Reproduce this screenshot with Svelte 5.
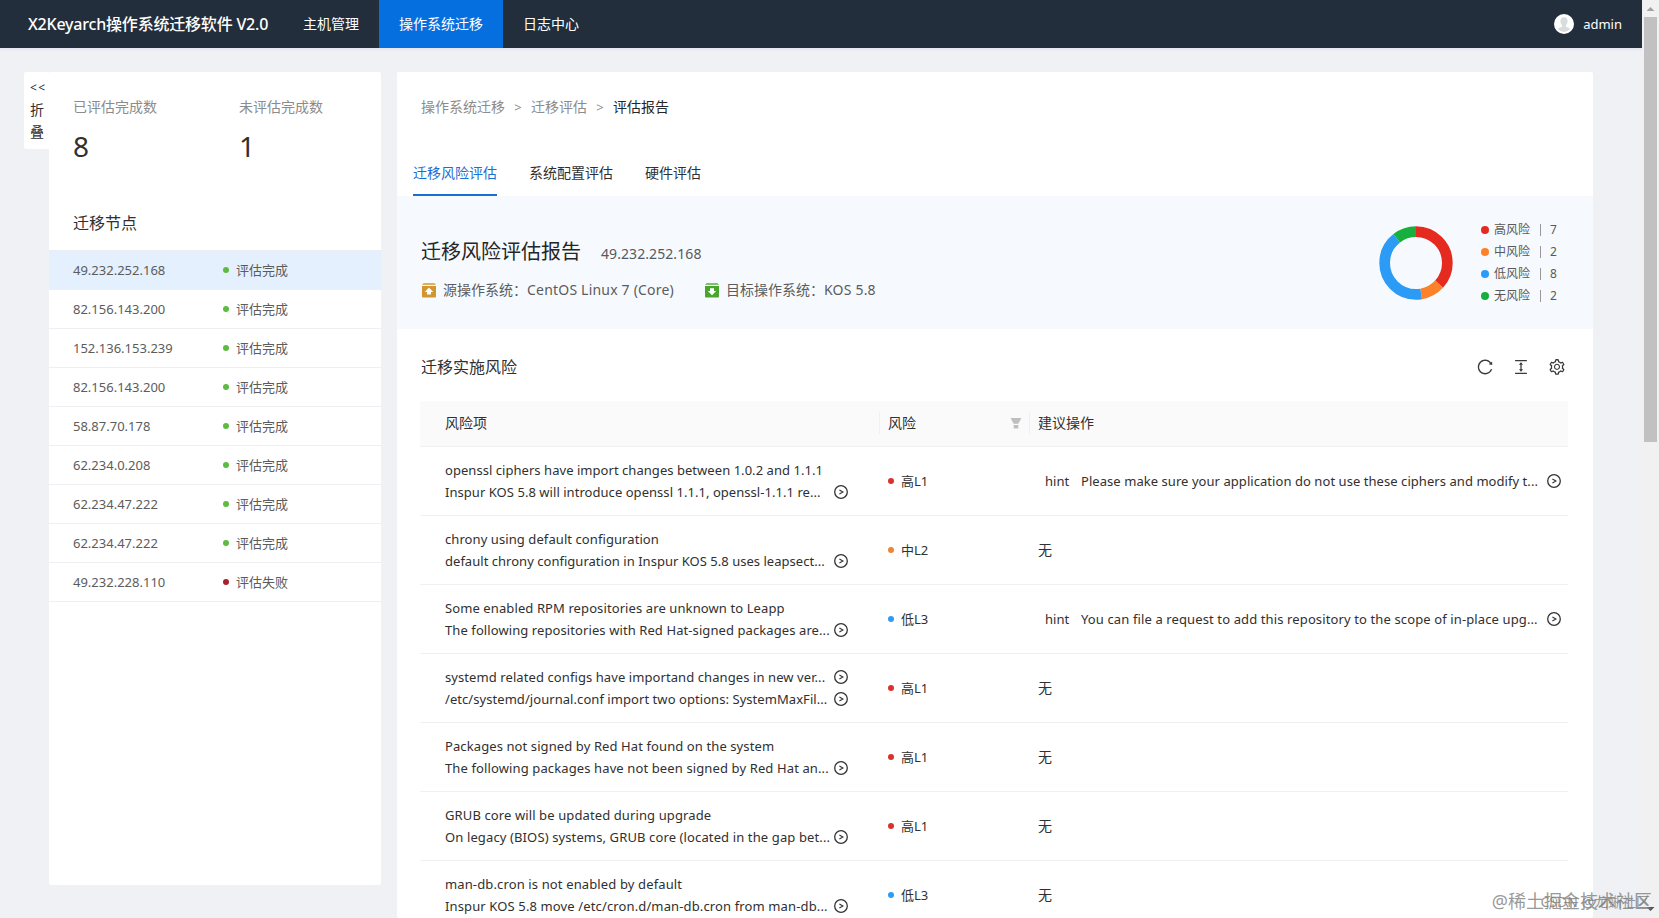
<script>
  const nodes = [
    ['49.232.252.168', true], ['82.156.143.200', true], ['152.136.153.239', true],
    ['82.156.143.200', true], ['58.87.70.178', true], ['62.234.0.208', true],
    ['62.234.47.222', true], ['62.234.47.222', true], ['49.232.228.110', false]
  ];
  const high = ['高L1', '#d9312b'];
  const mid = ['中L2', '#ee8434'];
  const low = ['低L3', '#2f9bf4'];
  // ls: letter spacing of the title, the summary and the hint, in px
  const risks = [
    { a: 'openssl ciphers have import changes between 1.0.2 and 1.1.1', b: 'Inspur KOS 5.8 will introduce openssl 1.1.1, openssl-1.1.1 re...', level: high, hint: 'Please make sure your application do not use these ciphers and modify t...', ls: [0.045, 0.045, 0.055] },
    { a: 'chrony using default configuration', b: 'default chrony configuration in Inspur KOS 5.8 uses leapsect...', level: mid, ls: [0.08, 0.025] },
    { a: 'Some enabled RPM repositories are unknown to Leapp', b: 'The following repositories with Red Hat-signed packages are...', level: low, hint: 'You can file a request to add this repository to the scope of in-place upg...', ls: [0.1, 0.09, 0.12] },
    { a: 'systemd related configs have importand changes in new ver...', more: true, b: '/etc/systemd/journal.conf import two options: SystemMaxFil...', level: high, ls: [0.085, 0.06] },
    { a: 'Packages not signed by Red Hat found on the system', b: 'The following packages have not been signed by Red Hat an...', level: high, ls: [0.1, 0.12] },
    { a: 'GRUB core will be updated during upgrade', b: 'On legacy (BIOS) systems, GRUB core (located in the gap bet...', level: high, ls: [0.11, 0.12] },
    { a: 'man-db.cron is not enabled by default', b: 'Inspur KOS 5.8 move /etc/cron.d/man-db.cron from man-db...', level: low, ls: [0.13, 0.13] }
  ];
  const legend = [
    { name: '高风险', n: 7, color: '#e52a20' },
    { name: '中风险', n: 2, color: '#fd8128' },
    { name: '低风险', n: 8, color: '#2b9bf5' },
    { name: '无风险', n: 2, color: '#17b03e' }
  ];
  const total = legend.reduce((s, l) => s + l.n, 0);
  let sum = 0;
  const arcs = legend.map((l) => {
    const arc = { color: l.color, len: (l.n / total) * 100, start: (sum / total) * 100 };
    sum += l.n;
    return arc;
  });
</script>

{#snippet more()}
  <svg class="more" viewBox="0 0 14 14" width="14" height="14" fill="none" stroke="#333">
    <circle cx="7" cy="7" r="6.3" stroke-width="1.3" />
    <path d="M5.4 5 8.900 7 5.400 9" stroke-width="1.1" />
  </svg>
{/snippet}

<div class="page">
  <div class="view">
    <header>
      <h1>X2Keyarch操作系统迁移软件 V2.0</h1>
      <nav><a>主机管理</a><a class="on">操作系统迁移</a><a>日志中心</a></nav>
      <div class="user">
        <svg viewBox="0 0 20 20" width="20" height="20">
          <circle cx="10" cy="10" r="10" fill="#fff" />
          <path d="M10 3.2c2.4 0 3.6 1.6 3.6 3.8 0 2-.8 3.4-1.7 4.2v1.3c.8.9 3.3 1.2 4.3 2.6A8.300 8.300 0 0 1 10 18a8.300 8.300 0 0 1-6.200-2.900c1-1.400 3.500-1.700 4.300-2.600v-1.300C7.200 10.400 6.400 9 6.400 7c0-2.200 1.200-3.800 3.600-3.800z" fill="#d9dcdc" />
        </svg>
        <span>admin</span>
      </div>
    </header>

    <div class="body">
      <div class="fold"><i>&lt;&lt;</i><span>折</span><span>叠</span></div>
      <aside>
        <div class="stats">
          <div><label>已评估完成数</label><b>8</b></div>
          <div><label>未评估完成数</label><b>1</b></div>
        </div>
        <h2>迁移节点</h2>
        <ul>
          {#each nodes as [ip, ok], i}
            <li class:sel={i === 0}><span class="ip">{ip}</span><em class:bad={!ok}></em><span>{ok ? '评估完成' : '评估失败'}</span></li>
          {/each}
        </ul>
      </aside>

      <main>
        <div class="crumbs"><span>操作系统迁移</span><i>&gt;</i><span>迁移评估</span><i>&gt;</i><span class="cur">评估报告</span></div>
        <div class="tabs"><span class="on">迁移风险评估</span><span>系统配置评估</span><span>硬件评估</span></div>
        <section class="banner">
          <div class="info">
            <div class="title"><h3>迁移风险评估报告</h3><span>49.232.252.168</span></div>
            <div class="os">
              <svg viewBox="0 0 14 15" width="14" height="15">
                <path d="M1.500 0h11L14 2H0z" fill="#e0ad5c" /><path d="M0 3h14v10.500a1 1 0 0 1-1 1H1a1 1 0 0 1-1-1z" fill="#cf9632" />
                <path d="M7 4.600 11.200 8.900H9v2.700H5V8.900H2.800z" fill="#fff" />
              </svg>
              <span class="cn">源操作系统：</span><span class="src">CentOS Linux 7 (Core)</span>
              <svg viewBox="0 0 14 15" width="14" height="15">
                <path d="M1.500 0h11L14 2H0z" fill="#7cc26a" /><path d="M0 3h14v10.500a1 1 0 0 1-1 1H1a1 1 0 0 1-1-1z" fill="#4aa52e" />
                <path d="M7 12.200 11.200 7.900H9V5.200H5v2.700H2.800z" fill="#fff" />
              </svg>
              <span class="cn">目标操作系统：</span><span class="dst">KOS 5.8</span>
            </div>
          </div>
          <svg class="donut" viewBox="0 0 74 74" width="74" height="74">
            <g transform="rotate(-90 37 37)" fill="none" stroke-width="10.700">
              {#each arcs as a}
                <circle cx="37" cy="37" r="31.350" pathLength="100" stroke={a.color} stroke-dasharray="{a.len} {100 - a.len}" stroke-dashoffset={-a.start} />
              {/each}
            </g>
          </svg>
          <div class="legend">
            {#each legend as l}
              <div><em style="background:{l.color}"></em><span>{l.name}</span><i></i><b>{l.n}</b></div>
            {/each}
          </div>
        </section>

        <div class="bar">
          <h4>迁移实施风险</h4>
          <svg viewBox="0 0 1024 1024" width="18" height="18"><path d="M909.1 209.3l-56.4 44.1C775.8 155.1 656.2 92 521.9 92 290 92 102.3 279.5 102 511.5 101.7 743.7 289.8 932 521.9 932c181.3 0 335.8-115 394.6-276.1 1.5-4.2-.7-8.9-4.9-10.3l-56.7-19.5a8 8 0 00-10.1 4.8c-1.8 5-3.8 10-5.9 14.9-17.3 41-42.1 77.8-73.7 109.4A344.77 344.77 0 01655.9 829c-42.3 17.9-87.4 27-133.8 27-46.5 0-91.500-9.100-133.800-27A341.500 341.500 0 01279 755.200a342.160 342.160 0 01-73.700-109.400c-17.900-42.400-27-87.400-27-133.900s9.100-91.500 27-133.900c17.300-41 42.100-77.800 73.700-109.400 31.600-31.600 68.400-56.400 109.300-73.800 42.300-17.900 87.400-27 133.800-27 46.500 0 91.500 9.100 133.800 27a341.500 341.500 0 01109.300 73.800c9.900 9.900 19.200 20.400 27.800 31.400l-60.200 47a8 8 0 003 14.100l175.600 43c5 1.200 9.900-2.600 9.900-7.700l.8-180.900c-.1-6.600-7.800-10.300-13-6.200z" /></svg>
          <svg viewBox="0 0 1024 1024" width="18" height="18"><path d="M840 836H184c-4.400 0-8 3.600-8 8v60c0 4.400 3.600 8 8 8h656c4.400 0 8-3.600 8-8v-60c0-4.400-3.600-8-8-8zm0-724H184c-4.400 0-8 3.600-8 8v60c0 4.400 3.600 8 8 8h656c4.400 0 8-3.600 8-8v-60c0-4.400-3.600-8-8-8zM610.800 378c6 0 9.400-7 5.700-11.700L515.700 238.700a7.140 7.140 0 00-11.300 0L403.600 366.300a7.230 7.230 0 005.700 11.700H476v268h-62.800c-6 0-9.400 7-5.700 11.700l100.800 127.500c2.900 3.700 8.500 3.700 11.300 0l100.800-127.500c3.700-4.700.4-11.700-5.700-11.700H548V378h62.800z" /></svg>
          <svg viewBox="0 0 1024 1024" width="18" height="18"><path d="M924.800 625.700l-65.500-56c3.100-19 4.700-38.400 4.700-57.800s-1.600-38.800-4.700-57.800l65.500-56a32.030 32.030 0 009.300-35.200l-.9-2.600a443.740 443.740 0 00-79.700-137.900l-1.800-2.100a32.120 32.120 0 00-35.100-9.500l-81.300 28.900c-30-24.600-63.500-44-99.700-57.600l-15.700-85a32.050 32.050 0 00-25.800-25.700l-2.700-.5c-52.100-9.400-106.900-9.400-159 0l-2.700.5a32.050 32.050 0 00-25.800 25.700l-15.800 85.400a351.860 351.860 0 00-99 57.400l-81.900-29.100a32 32 0 00-35.100 9.500l-1.800 2.100a446.020 446.020 0 00-79.700 137.900l-.9 2.600c-4.500 12.500-.8 26.500 9.300 35.200l66.300 56.600c-3.100 18.800-4.600 38-4.600 57.100 0 19.200 1.500 38.400 4.600 57.100L99 625.500a32.030 32.030 0 00-9.300 35.200l.9 2.600c18.100 50.400 44.900 96.900 79.700 137.900l1.800 2.100a32.120 32.120 0 0035.100 9.500l81.900-29.100c29.800 24.500 63.100 43.900 99 57.400l15.800 85.400a32.050 32.050 0 0025.800 25.700l2.700.5a449.400 449.400 0 00159 0l2.700-.5a32.050 32.050 0 0025.800-25.700l15.700-85a350 350 0 0099.700-57.600l81.300 28.900a32 32 0 0035.100-9.500l1.800-2.100c34.800-41.100 61.600-87.500 79.700-137.900l.9-2.600c4.500-12.300.8-26.300-9.300-35zM788.300 465.900c2.500 15.100 3.800 30.600 3.800 46.100s-1.300 31-3.800 46.100l-6.600 40.100 74.700 63.900a370.030 370.030 0 01-42.600 73.600L721 702.800l-31.400 25.800c-23.900 19.600-50.500 35-79.300 45.800l-38.100 14.300-17.900 97a377.500 377.500 0 01-85 0l-17.900-97.200-37.800-14.500c-28.500-10.800-55-26.200-78.700-45.700l-31.400-25.900-93.400 33.200c-17-22.900-31.200-47.600-42.600-73.600l75.500-64.500-6.500-40c-2.400-14.900-3.700-30.300-3.700-45.500 0-15.300 1.200-30.600 3.700-45.500l6.500-40-75.500-64.500c11.300-26.100 25.600-50.700 42.600-73.600l93.400 33.200 31.400-25.900c23.700-19.500 50.200-34.900 78.700-45.700l37.900-14.300 17.900-97.200c28.100-3.200 56.800-3.200 85 0l17.900 97 38.100 14.300c28.700 10.800 55.400 26.200 79.300 45.800l31.400 25.800 92.800-32.900c17 22.900 31.200 47.600 42.600 73.600L781.800 426l6.500 39.900zM512 326c-97.200 0-176 78.800-176 176s78.800 176 176 176 176-78.800 176-176-78.800-176-176-176zm79.200 255.200A111.600 111.600 0 01512 614c-29.900 0-58-11.700-79.200-32.800A111.600 111.600 0 01400 502c0-29.900 11.700-58 32.800-79.200C454 401.600 482.100 390 512 390c29.900 0 58 11.600 79.200 32.800A111.600 111.600 0 01624 502c0 29.900-11.700 58-32.800 79.200z" /></svg>
        </div>

        <div class="table">
          <div class="row head">
            <div class="c1">风险项</div>
            <div class="c2"><span>风险</span><svg viewBox="0 0 12 11" width="12" height="11" fill="#bfbfbf"><path d="M.5 0h11L8.300 5.800H3.700zM3.700 7h4.600v3.500H3.700z" /></svg></div>
            <div class="c3">建议操作</div>
          </div>
          {#each risks as r}
            <div class="row">
              <div class="c1">
                <p><span style="letter-spacing:{r.ls[0]}px">{r.a}</span>{#if r.more}{@render more()}{/if}</p>
                <p><span style="letter-spacing:{r.ls[1]}px">{r.b}</span>{@render more()}</p>
              </div>
              <div class="c2"><em style="background:{r.level[1]}"></em><span>{r.level[0]}</span></div>
              <div class="c3">
                {#if r.hint}<span class="hint">hint</span><span class="msg" style="letter-spacing:{r.ls[2]}px">{r.hint}</span>{@render more()}{:else}无{/if}
              </div>
            </div>
          {/each}
        </div>
      </main>
    </div>
  </div>
  <div class="scroll"><i class="up"></i><div class="thumb"></div><i class="down"></i></div>
  <div class="mark back">CSDN @龙蜥社区</div>
  <div class="mark">@稀土掘金技术社区</div>
</div>

<style>
  :global(body) { margin: 0; overflow: hidden; }
  * { box-sizing: border-box; }
  h1, h2, h3, h4, p, ul { margin: 0; padding: 0; font-weight: 400; }
  i, em { font-style: normal; }
  .page { position: relative; display: flex; width: 1659px; height: 918px; overflow: hidden; background: #eff1f5; font: 14px/22px "Noto Sans", "Noto Sans CJK SC", sans-serif; color: #303030; white-space: nowrap; }
  .view { width: 1642px; height: 918px; overflow: hidden; }
  header { display: flex; align-items: center; height: 48px; padding: 0 20px 0 28px; background: #232e3c; color: #fff; box-shadow: 0 1px 3px #dfe1f0; }
  h1 { width: 255px; font-size: 16px; font-weight: 500; letter-spacing: -.2px; }
  nav { display: flex; }
  nav a { display: flex; align-items: center; height: 48px; padding: 0 20px; }
  nav .on { background: #066fdf; }
  .user { display: flex; align-items: center; gap: 9px; margin-left: auto; font-size: 13px; }
  .body { display: flex; align-items: flex-start; padding: 24px 0 0 24px; }
  .fold { display: flex; flex-direction: column; width: 25px; height: 77px; padding: 5px 0 0 6px; background: #fff; border-radius: 2px 0 0 2px; }
  .fold i { letter-spacing: 1.5px; font-size: 12px; }
  aside { width: 332px; height: 813px; background: #fff; border-radius: 2px; }
  .stats { display: flex; padding: 24px 0 0 24px; }
  .stats div { flex: none; width: 166px; }
  .stats div + div { width: 142px; }
  label { display: block; color: #8c8c8c; }
  b { font-weight: 400; }
  .stats b { display: block; margin-top: 8px; font-size: 28px; line-height: 40px; }
  h2 { padding: 45px 0 0 24px; font-size: 16px; line-height: 24px; }
  ul { margin-top: 15px; border-top: 1px solid #e9eef4; }
  li { display: flex; align-items: center; height: 39px; padding-left: 24px; border-bottom: 1px solid #eeeff1; font-size: 13px; color: #5c5c5c; }
  li.sel { background: #e4f0fe; }
  .ip { width: 150px; }
  em { flex: none; width: 6px; height: 6px; border-radius: 50%; background: #5dbb3f; }
  li em { margin-right: 7px; }
  em.bad { background: #a5222f; }
  main { width: 1196px; height: 846px; margin-left: 16px; background: #fff; border-radius: 2px; overflow: hidden; }
  .crumbs { display: flex; padding: 24px 0 0 24px; color: #8c8c8c; }
  .crumbs i { width: 26px; text-align: center; font-size: 13px; }
  .cur { color: #262626; }
  .tabs { display: flex; gap: 32px; height: 46px; margin: 32px 0 0 16px; line-height: 46px; }
  .tabs .on { color: #1a6fd2; border-bottom: 2px solid #1a6fd2; }
  .banner { display: flex; height: 133px; padding: 0 22px 0 24px; background: #f6faff; }
  .info { flex: 1; padding-top: 41px; }
  .title { display: flex; align-items: baseline; gap: 20px; color: #595959; }
  .title span { letter-spacing: .08px; }
  h3 { font-size: 20px; line-height: 30px; color: #262626; }
  .os { display: flex; align-items: center; margin-top: 12px; padding-left: 1px; color: #5c5c5c; }
  .cn { margin-left: 7px; }
  .src { width: 178px; letter-spacing: .2px; }
  .dst { letter-spacing: .2px; }
  .donut { margin: 30px 28px 0 0; }
  .legend { width: 90px; padding-top: 23px; font-size: 12px; color: #595959; }
  .legend div { display: flex; align-items: center; height: 22px; }
  .legend em { width: 8px; height: 8px; margin-right: 5px; }
  .legend i { width: 1px; height: 12px; margin: 0 9px 0 10px; background: #999; }
  .bar { display: flex; align-items: center; gap: 18px; height: 24px; margin: 26px 27px 0 24px; }
  .bar svg { fill: #3a3a3a; }
  h4 { flex: 1; font-size: 16px; }
  .table { width: 1148px; margin: 22px 0 0 23px; }
  .row { display: grid; grid-template-columns: 459px 150px 539px; align-items: center; height: 69px; border-bottom: 1px solid #f0f0f0; }
  .head { height: 46px; padding-bottom: 1px; background: #fafafa; }
  .c1 { padding-left: 25px; }
  .c1 p { display: flex; align-items: center; width: 403px; height: 22px; font-size: 13px; }
  .more { flex: none; margin-left: auto; }
  .c2 { display: flex; align-items: center; padding-left: 8px; }
  .c2 em { margin-right: 7px; }
  .row:not(.head) .c2 { padding-left: 9px; font-size: 13px; }
  .head .c2, .head .c3 { height: 22px; border-left: 1px solid #f0f0f0; }
  .head .c2 svg { margin: 0 0 0 94px; }
  .c3 { display: flex; align-items: center; padding: 0 7px 0 8px; }
  .row:not(.head) .c3 { padding-left: 9px; }
  .hint { flex: none; width: 36px; margin-left: 7px; font-size: 13px; }
  .msg { font-size: 13px; }
  .scroll { display: flex; flex-direction: column; align-items: center; width: 17px; height: 918px; background: #f1f1f1; }
  .thumb { width: 13px; height: 425px; background: #c1c1c1; }
  .up { width: 8px; height: 4px; margin: 7px 0 6px; background: #a3a3a3; clip-path: polygon(50% 0, 100% 100%, 0 100%); }
  .down { width: 8px; height: 4px; margin: auto 0 7px; background: #505050; clip-path: polygon(0 0, 100% 0, 50% 100%); }
  .mark { position: absolute; right: 7px; bottom: 5px; font-size: 18px; line-height: 24px; color: rgba(125, 125, 125, .8); }
  .back { right: 9px; bottom: 4px; font-size: 14px; }
</style>
